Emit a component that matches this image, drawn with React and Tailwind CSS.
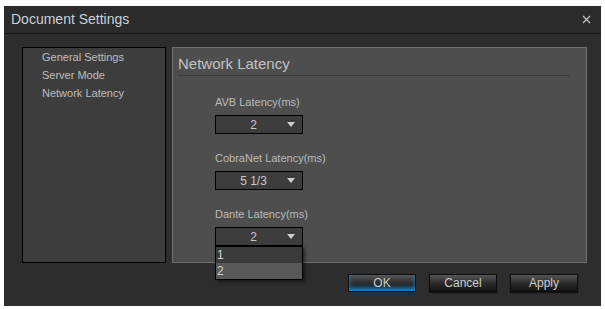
import React from 'react';

const sans = { fontFamily: '"Liberation Sans", Arial, sans-serif' };

const Dropdown = ({ value, open, options = [] }) => (
  <div className="relative w-[88px] h-[19px]">
    <div className="flex items-center h-full border border-black bg-[#3c3c3c] text-[12px] text-[#c8c8c8]">
      <span className="flex-1 text-center pl-[4px]">{value}</span>
      <svg width="8" height="5" viewBox="0 0 8 5" className="mr-[7px]">
        <path d="M0 0 H8 L4 5 Z" fill="#d0d0d0" />
      </svg>
    </div>
    {open && (
      <div className="absolute left-0 top-[19px] w-[88px] border border-black bg-[#3a3a3a] shadow-[2px_2px_3px_rgba(0,0,0,0.5)] text-[12px] text-[#d2d2d2]">
        {options.map((opt) => (
          <div
            key={opt}
            className={`h-[16px] leading-[16px] pl-[1px] ${opt === value ? 'bg-[#585858]' : 'bg-[#3a3a3a]'}`}
          >
            {opt}
          </div>
        ))}
      </div>
    )}
  </div>
);

const Field = ({ label, children }) => (
  <div className="flex flex-col">
    <div className="h-[13px] leading-[13px] text-[11px] text-[#bababa] mb-[6px]">{label}</div>
    {children}
  </div>
);

const DialogButton = ({ children, primary }) => (
  <button
    className={`w-[68px] h-[18px] border border-[#0c0c0c] text-[12px] leading-[16px] text-[#cccccc] bg-gradient-to-b from-[#575757] via-[#2c2c2c] to-[#141414] ${
      primary ? 'shadow-[inset_0_-3px_4px_#1b8ad6]' : 'shadow-[0_1px_1px_rgba(0,0,0,0.6)]'
    }`}
  >
    {children}
  </button>
);

export default function App() {
  return (
    <div className="w-[605px] h-[309px] bg-white pt-[6px] pl-[4px]" style={sans}>
      <div className="w-[597px] h-[300px] bg-[#2d2d2d] flex flex-col">
        {/* Title bar */}
        <div className="h-[28px] flex items-center justify-between pl-[7px] pr-[10px] bg-[#2b2b2b] border-b border-[#151515]">
          <span className="text-[14px] text-[#c8d2d8]">Document Settings</span>
          <svg width="9" height="9" viewBox="0 0 9 9">
            <path d="M1 1 L8 8 M8 1 L1 8" stroke="#c4c4c4" strokeWidth="1.2" />
          </svg>
        </div>

        {/* Body */}
        <div className="flex flex-col pl-[18px] pr-[14px] pt-[13px]">
          <div className="flex gap-[6px] h-[216px]">
            {/* Nav */}
            <div className="w-[144px] border border-black bg-[#3d3d3d] pl-[19px] text-[11px] text-[#bebebe]">
              <div className="h-[18px] leading-[18px]">General Settings</div>
              <div className="h-[18px] leading-[18px]">Server Mode</div>
              <div className="h-[18px] leading-[18px]">Network Latency</div>
            </div>

            {/* Content */}
            <div className="flex-1 border border-[#717171] bg-[#4e4e4e]">
              <div className="ml-[5px] mr-[16px] pt-[5px] h-[28px] leading-[22px] text-[15px] text-[#c2c2c2] border-b border-[#3a3a3a]">
                Network Latency
              </div>
              <div className="flex flex-col gap-[18px] pl-[42px] pt-[20px]">
                <Field label="AVB Latency(ms)">
                  <Dropdown value="2" />
                </Field>
                <Field label="CobraNet Latency(ms)">
                  <Dropdown value="5 1/3" />
                </Field>
                <Field label="Dante Latency(ms)">
                  <Dropdown value="2" open options={['1', '2']} />
                </Field>
              </div>
            </div>
          </div>

          {/* Buttons */}
          <div className="flex justify-end gap-[13px] mt-[11px] pr-[9px]">
            <DialogButton primary>OK</DialogButton>
            <DialogButton>Cancel</DialogButton>
            <DialogButton>Apply</DialogButton>
          </div>
        </div>
      </div>
    </div>
  );
}
